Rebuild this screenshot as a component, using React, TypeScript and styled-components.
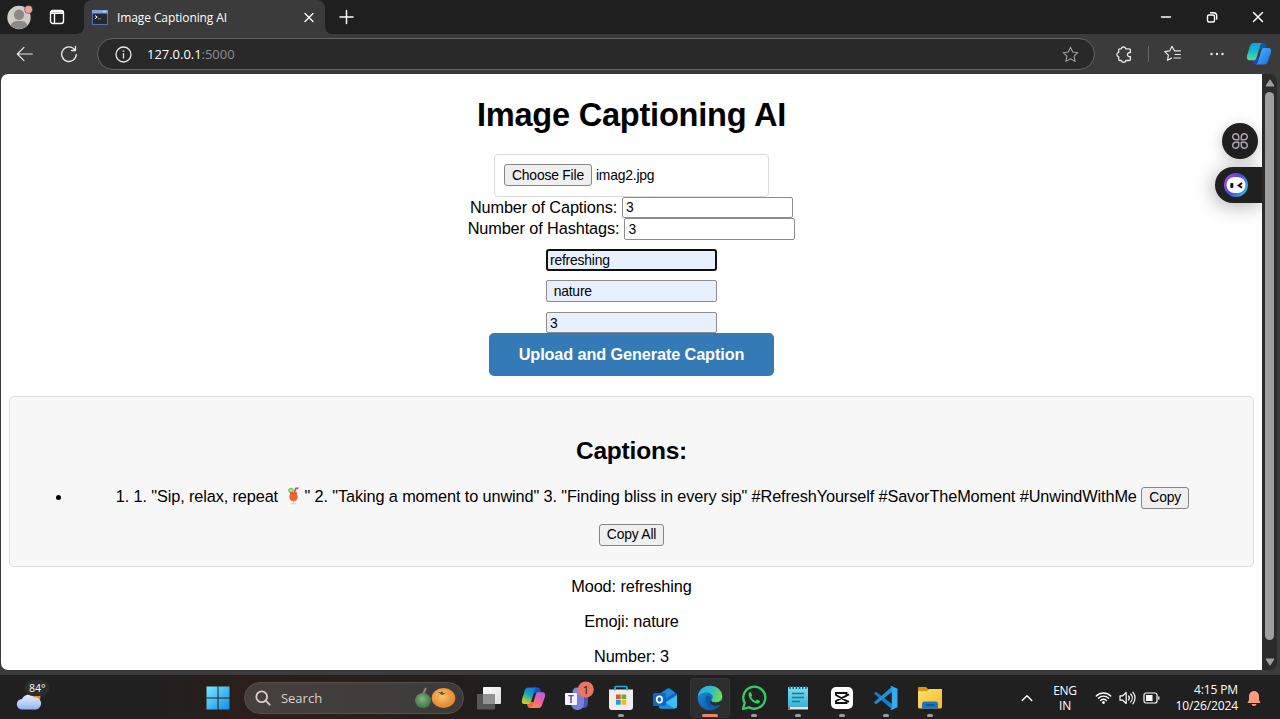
import React from "react";
import styled, { createGlobalStyle, css } from "styled-components";

const Global = createGlobalStyle`
  body { margin: 0; overflow: hidden; background: #3b3b3b; }
  * { box-sizing: border-box; }
  svg { display: block; flex: none; }
`;

const arial = `"Liberation Sans", Arial, sans-serif`;
const ui = `"Open Sans", "Noto Sans", sans-serif`;

const Screen = styled.div`
  width: 1280px;
  height: 719px;
  display: flex;
  flex-direction: column;
  background: #3b3b3b;
  font-family: ${ui};
  overflow: hidden;
`;

/* ---------- Browser chrome ---------- */
const TabStrip = styled.header`
  height: 34px;
  flex: none;
  display: flex;
  background: #1f1f1f;
  color: #fff;
`;
const StripLead = styled.div`
  width: 84px;
  display: flex;
  align-items: center;
  padding-left: 6px;
  gap: 16px;
`;
const Tab = styled.div`
  width: 241px;
  height: 34px;
  display: flex;
  align-items: center;
  padding: 0 10px 0 8px;
  background: #3b3b3b;
  border-radius: 8px 8px 0 0;
  position: relative;
  &::before,
  &::after {
    content: "";
    position: absolute;
    bottom: 0;
    width: 7px;
    height: 7px;
  }
  &::before { left: -7px; background: radial-gradient(circle at 0 0, #1f1f1f 6.5px, #3b3b3b 7px); }
  &::after { right: -7px; background: radial-gradient(circle at 100% 0, #1f1f1f 6.5px, #3b3b3b 7px); }
`;
const TabTitle = styled.span`
  flex: 1;
  margin-left: 9px;
  font-size: 12px;
  letter-spacing: -0.1px;
  white-space: nowrap;
`;
const NewTab = styled.div`
  padding: 9px 0 0 14px;
  flex: 1;
`;
const WindowButtons = styled.div`
  display: flex;
  align-items: center;
  gap: 31px;
  padding-right: 14px;
`;
const Toolbar = styled.div`
  height: 40px;
  flex: none;
  display: flex;
  align-items: center;
  padding: 0 8px 0 16px;
  color: #e8e8e8;
`;
const NavButtons = styled.div`
  display: flex;
  gap: 26px;
  width: 81px;
`;
const AddressBar = styled.div`
  width: 998px;
  height: 32px;
  display: flex;
  align-items: center;
  padding: 0 15px 0 17px;
  border: 1px solid #636363;
  border-radius: 16px;
  background: #292929;
`;
const Url = styled.span`
  flex: 1;
  margin-left: 15px;
  font-size: 13px;
  letter-spacing: -0.03px;
  color: #fff;
  span { color: #8f8f8f; }
`;
const ToolbarActions = styled.div`
  flex: 1;
  display: flex;
  align-items: center;
  padding-left: 21px;
  gap: 15px;
`;
const Menu = styled.div`
  display: flex;
  align-items: center;
  gap: 21px;
  margin-left: 12px;
`;
const Divider = styled.i`
  width: 1px;
  height: 16px;
  background: #646464;
`;

/* ---------- Page ---------- */
const Viewport = styled.div`
  height: 596px;
  flex: none;
  display: flex;
  padding-left: 1px;
  position: relative;
`;
const Page = styled.main`
  width: 1261px;
  height: 596px;
  padding: 21px 8px 0;
  background: #fff;
  border-radius: 7px 0 0 7px;
  color: #000;
  font-family: ${arial};
  font-size: 16.3px;
  letter-spacing: -0.11px;
  display: flex;
  flex-direction: column;
  align-items: center;
  overflow: hidden;
  & > * { flex: none; }
`;
const Title = styled.h1`
  margin: 0 0 20px;
  font-size: 32.6px;
  line-height: 39px;
  letter-spacing: -0.24px;
`;
const Button = styled.button`
  height: 22px;
  padding: 0 7px;
  border: 1px solid #858585;
  border-radius: 3px;
  background: #efefef;
  color: #000;
  font: 13.9px ${arial};
  letter-spacing: -0.2px;
  line-height: 19px;
  white-space: nowrap;
`;
const FileBox = styled.div`
  width: 275px;
  height: 42.5px;
  display: flex;
  align-items: center;
  gap: 4px;
  padding-left: 9px;
  border: 1px solid #dadada;
  border-radius: 4px;
  font-size: 13.9px;
  letter-spacing: -0.2px;
`;
const FieldRow = styled.label`
  display: flex;
  align-items: center;
  gap: 5px;
  height: 21.7px;
  line-height: 20px;
  span { margin-top: -1.5px; }
`;
const Input = styled.input<{ $filled?: boolean; $focus?: boolean }>`
  width: 171px;
  height: 21.5px;
  padding: 0 3px;
  border: 1px solid #8c8c8c;
  border-radius: 2px;
  background: ${(p) => (p.$filled ? "#e8f0fe" : "#fff")};
  font: 13.9px ${arial};
  letter-spacing: -0.2px;
  color: #000;
  outline: none;
  ${(p) =>
    p.$focus &&
    css`
      border: 2px solid #101010;
      border-radius: 3px;
      padding: 0 2px;
    `}
`;
const HintFields = styled.div`
  display: flex;
  flex-direction: column;
  gap: 9.8px;
  margin-top: 9.3px;
`;
const Submit = styled.button`
  width: 285.5px;
  height: 43px;
  padding: 0;
  border: 0;
  border-radius: 5px;
  background: #337ab7;
  color: #fff;
  font: bold 16.3px ${arial};
  letter-spacing: -0.12px;
`;
const Results = styled.section`
  width: 1245px;
  height: 171.5px;
  margin-top: 19.7px;
  padding: 39px 21px 0 21px;
  border: 1px solid #ddd;
  border-radius: 5px;
  background: #f7f7f7;
  text-align: center;
`;
const ResultsTitle = styled.h2`
  margin: 0;
  font-size: 24.5px;
  line-height: 30px;
  letter-spacing: -0.2px;
`;
const CaptionList = styled.ul`
  margin: 21px 0 15px;
  padding: 0 0 0 41.7px;
`;
const Caption = styled.li`
  height: 22px;
  line-height: 22px;
  white-space: nowrap;
  display: flex;
  justify-content: center;
  align-items: center;
  gap: 4.5px;
  position: relative;
  &::before {
    content: "";
    position: absolute;
    left: -17px;
    top: 8px;
    width: 5px;
    height: 5px;
    border-radius: 50%;
    background: #000;
  }
`;
const CaptionText = styled.span`
  margin-top: -3px;
  svg { display: inline-block; vertical-align: -3px; }
`;
const Detail = styled.p`
  margin: 0;
  height: 34.7px;
  line-height: 20px;
  &:first-of-type { margin-top: 9px; }
`;
const Scrollbar = styled.div`
  width: 15px;
  height: 596px;
  display: flex;
  flex-direction: column;
  align-items: center;
  padding: 5px 0 3px;
  background: #2b2b2b;
  border-radius: 0 7px 7px 0;
`;
const Thumb = styled.div`
  width: 9px;
  height: 548px;
  margin: 5px 0 18px;
  border-radius: 5px;
  background: #9f9f9f;
`;
const FloatingTools = styled.div`
  position: absolute;
  right: 18px;
  top: 49px;
  display: flex;
  flex-direction: column;
  align-items: flex-end;
  gap: 8px;
`;
const RoundTool = styled.div`
  width: 36px;
  height: 36px;
  margin-right: 4px;
  border-radius: 50%;
  background: #202020;
  display: grid;
  place-items: center;
  box-shadow: 0 3px 14px rgba(0, 0, 0, 0.22);
`;
const Assistant = styled.div`
  width: 47.5px;
  height: 36px;
  padding: 6px 0 0 9px;
  border-radius: 18px 0 0 18px;
  background: #202020;
  box-shadow: -2px 3px 20px rgba(0, 0, 0, 0.3);
  clip-path: inset(-50px 0 -50px -50px);
`;

/* ---------- Taskbar ---------- */
const Taskbar = styled.footer`
  margin-top: 5px;
  height: 44px;
  flex: none;
  display: flex;
  align-items: center;
  background: linear-gradient(90deg, #202020 150px, #291e1a 240px, #2b1f19 310px, #211f1e 450px, #202020 520px);
  color: #fff;
`;
const Weather = styled.div`
  width: 196px;
  height: 44px;
  padding: 14px 0 0 16px;
  position: relative;
`;
const Temperature = styled.span`
  position: absolute;
  left: 25px;
  top: 5px;
  width: 24px;
  height: 16px;
  padding-left: 4px;
  border-radius: 8px;
  background: #2d2d2d;
  font-size: 10.5px;
  line-height: 16px;
`;
const Slot = styled.div<{ $mark?: "idle" | "active" }>`
  width: 44.15px;
  height: 44px;
  padding-top: 2px;
  display: grid;
  place-items: center;
  position: relative;
  ${(p) =>
    p.$mark &&
    css`
      &::after {
        content: "";
        position: absolute;
        bottom: 2px;
        left: 50%;
        width: ${p.$mark === "active" ? 16 : 6}px;
        height: 3px;
        border-radius: 2px;
        transform: translateX(-50%);
        background: ${p.$mark === "active" ? "#ee8568" : "#9b9b9b"};
      }
    `}
  ${(p) =>
    p.$mark === "active" &&
    css`
      &::before {
        content: "";
        position: absolute;
        inset: 3px 2px 1px;
        border: 1px solid #353535;
        border-radius: 4px;
        background: #2d2d2d;
      }
    `}
  svg { position: relative; }
`;
const Search = styled.div`
  width: 220px;
  height: 32px;
  margin: 1px 2.9px 0 3.8px;
  padding: 0 7px 0 10px;
  display: flex;
  align-items: center;
  border: 1px solid #56504d;
  border-radius: 16px;
  background: linear-gradient(90deg, #47403d, #3c3b3a);
  color: #d4d0ce;
  font-size: 13px;
  span { flex: 1; margin-left: 10px; }
`;
const Tray = styled.div`
  flex: 1;
  display: flex;
  align-items: center;
  justify-content: flex-end;
  padding: 2px 19.5px 0 0;
`;
const Language = styled.div`
  width: 30px;
  margin: 0 15px 0 17px;
  text-align: center;
  font-size: 12px;
  line-height: 15.5px;
  letter-spacing: -0.3px;
`;
const Status = styled.div`
  display: flex;
  align-items: center;
  gap: 7px;
`;
const Clock = styled.div`
  width: 78px;
  text-align: right;
  font-size: 12px;
  line-height: 16px;
  letter-spacing: -0.12px;
  margin-right: 8.5px;
  white-space: nowrap;
`;

const Line = ({ w = 16, h = w, box = `0 0 ${w} ${h}`, sw = 1.2, children }: {
  w?: number; h?: number; box?: string; sw?: number; children: React.ReactNode;
}) => (
  <svg width={w} height={h} viewBox={box} fill="none" stroke="currentColor" strokeWidth={sw} strokeLinecap="round" strokeLinejoin="round">
    {children}
  </svg>
);

const Avatar = () => (
  <svg width="27" height="26" viewBox="0 0 27 26">
    <circle cx="13" cy="13.500" r="11.700" fill="#cfccc8" />
    <circle cx="13" cy="10.800" r="5.200" fill="#8c8885" />
    <path d="M5 22c0-4 3-5 8-5s8 1 8 5a12 12 0 0 1-16 0z" fill="#8c8885" />
    <circle cx="22.500" cy="5.500" r="4" fill="#f0a09b" stroke="#1f1f1f" strokeWidth=".4" />
  </svg>
);
const Favicon = () => (
  <svg width="16" height="15" viewBox="0 0 16 15">
    <rect x=".5" y=".5" width="15" height="14" fill="#25292e" stroke="#5571a8" />
    <path d="M0 0h16v3.500H0z" fill="#7ba3e0" />
    <path d="M11 1.700h3" stroke="#dbe9ff" />
    <path d="M3 5.500l2.200 1.600L3 8.700" stroke="#fff" fill="none" />
    <path d="M6 8.800h3" stroke="#79828e" />
  </svg>
);
const BrowserCopilot = () => (
  <svg width="26" height="24" viewBox="0 0 26 24">
    <defs>
      <linearGradient id="bc1" x1="0" y1="0" x2="0" y2="1"><stop stopColor="#169fe3" /><stop offset=".5" stopColor="#18b7cb" /><stop offset="1" stopColor="#5de08f" /></linearGradient>
      <linearGradient id="bc2" x1="0" y1="0" x2="1" y2="1"><stop stopColor="#56b8f8" /><stop offset="1" stopColor="#146de8" /></linearGradient>
    </defs>
    <path d="M14 1h3c2 0 2.700 1 3.200 2.800L21 7h-8z" fill="#125a9c" />
    <path d="M7 17l6-1-1 6H9c-2 0-2-3-2-5z" fill="#1749c6" />
    <path d="M8 1h9c-2 0-2.600 1.500-3.200 4l-3 10c-.8 2.700-2 3.300-4 3.300H4C1 18.300.4 16 1.200 13L4 4c.8-2 1.900-3 4-3z" fill="url(#bc1)" />
    <path d="M18 6h4c3 0 3.600 2 2.800 5L22 19c-.8 2.500-2 3.500-4.500 3.500H9c2 0 2.700-1.500 3.300-3.700l2.700-9.300C15.700 7 16.500 6 18 6z" fill="url(#bc2)" />
  </svg>
);
const Drink = () => (
  <svg width="22" height="18" viewBox="0 0 22 18">
    <path d="M12.300 6l1.500-4.500 2.700-.6" stroke="#dc405b" strokeWidth="1.500" fill="none" />
    <circle cx="9" cy="3.600" r="2.800" fill="#63d35c" />
    <circle cx="9" cy="3.600" r="1.400" fill="#a9e891" />
    <path d="M8 5.500h7c-.6 2 .9 2.300.7 4.700-.2 2.500-2 3.900-4.200 3.900s-4-1.400-4.200-3.900C7.100 7.800 8.600 7.500 8 5.500z" fill="#f3652b" />
    <path d="M8 5.500h7l-.2 1.200H8z" fill="#e34b35" />
    <path d="M11.500 14v2.500M8.500 16.800h6" stroke="#bed5ed" strokeWidth="1" />
  </svg>
);
const Face = () => (
  <svg width="24" height="24" viewBox="0 0 24 24">
    <defs><linearGradient id="fc" x1="0" y1=".2" x2="1" y2=".8"><stop stopColor="#a44bf4" /><stop offset=".45" stopColor="#5046df" /><stop offset="1" stopColor="#37bddf" /></linearGradient></defs>
    <circle cx="12" cy="12" r="12" fill="url(#fc)" />
    <rect x="2.500" y="4" width="19" height="16" rx="8" fill="#fff" />
    <rect x="6.300" y="10" width="3" height="5" rx="1" fill="#111" />
    <path d="M18 10l-3.300 2.500L18 14.800" stroke="#111" strokeWidth="2" fill="none" />
  </svg>
);
const Cloud = () => (
  <svg width="27" height="23" viewBox="0 0 27 23">
    <defs><linearGradient id="cl" x1="0" y1="0" x2="0" y2="1"><stop stopColor="#e5edff" /><stop offset=".6" stopColor="#b6cdf7" /><stop offset="1" stopColor="#8fb2ec" /></linearGradient></defs>
    <circle cx="19.500" cy="8" r="5" fill="#e98c2c" />
    <path d="M6 20.500A5 5 0 0 1 6 10.100 7 7 0 0 1 18 8.500a5.800 5.800 0 0 1 2 12z" fill="url(#cl)" />
  </svg>
);
const Windows = () => (
  <svg width="24" height="24" viewBox="0 0 24 24">
    <defs><linearGradient id="wn" x1="0" y1="0" x2="1" y2="1"><stop stopColor="#7ae7fb" /><stop offset="1" stopColor="#108fea" /></linearGradient></defs>
    <path d="M.5.500h11v11H.5zM12.500.500h11v11h-11zM.5 12.500h11v11H.5zM12.500 12.500h11v11h-11z" fill="url(#wn)" />
  </svg>
);
const Pumpkins = () => (
  <svg width="42" height="22" viewBox="0 0 42 22">
    <defs>
      <radialGradient id="gp" cx=".45" cy=".4"><stop stopColor="#84b781" /><stop offset="1" stopColor="#477c4c" /></radialGradient>
      <radialGradient id="op" cx=".45" cy=".4"><stop stopColor="#fbc470" /><stop offset="1" stopColor="#e88d34" /></radialGradient>
    </defs>
    <path d="M9 7c1-2 2-4 3-6" stroke="#9f806f" strokeWidth="2" />
    <ellipse cx="9" cy="13.500" rx="8" ry="7.500" fill="url(#gp)" />
    <path d="M6 7c-3 4-3 9 0 13M10 7c3 4 3 9 0 13" stroke="#5b8f5c" strokeWidth=".6" fill="none" />
    <ellipse cx="29.500" cy="11" rx="11.800" ry="10" fill="url(#op)" />
    <path d="M27 6c-5 3-5 11-1 14M31 5c6 2 8 8 4 14" stroke="#e3983f" strokeWidth=".8" fill="none" />
    <path d="M24 5l3 .5 1-1.500 1 2 3 .5-4 1.500z" fill="#6b4a2a" />
  </svg>
);
const TaskView = () => (
  <svg width="25" height="24" viewBox="0 0 25 24">
    <defs><linearGradient id="tv" x1="0" y1="0" x2="1" y2="1"><stop stopColor="#fff" /><stop offset="1" stopColor="#ddd" /></linearGradient></defs>
    <rect x="7" y="1" width="18" height="17" rx="1" fill="url(#tv)" />
    <rect x="1" y="8" width="18" height="15.500" rx="1" fill="#5d5d5d" fillOpacity=".9" />
    <path d="M7 8h12v10H7z" fill="#929292" />
  </svg>
);
const Copilot = () => (
  <svg width="25" height="24" viewBox="0 0 26 24">
    <defs>
      <linearGradient id="c1" x1=".6" y1="0" x2=".2" y2="1"><stop stopColor="#1778e4" /><stop offset=".45" stopColor="#19a6b4" /><stop offset=".75" stopColor="#8dc645" /><stop offset="1" stopColor="#f2c32e" /></linearGradient>
      <linearGradient id="c2" x1=".9" y1="0" x2=".2" y2="1"><stop stopColor="#a064ef" /><stop offset=".5" stopColor="#ee609a" /><stop offset="1" stopColor="#fc914d" /></linearGradient>
    </defs>
    <path d="M14 1h3c2 0 2.700 1 3.200 2.800L21 7h-8z" fill="#1852c2" />
    <path d="M6 17l7-1-1 6.500H9c-2 0-2.500-3-3-5.500z" fill="#f26847" />
    <path d="M8 1h9c-2 0-2.600 1.500-3.200 4l-3 10c-.8 2.700-2 3.300-4 3.300H4C1 18.300.4 16 1.200 13L4 4c.8-2 1.900-3 4-3z" fill="url(#c1)" />
    <path d="M18 6h4c3 0 3.600 2 2.800 5L22 19c-.8 2.500-2 3.500-4.500 3.500H9c2 0 2.700-1.500 3.300-3.700l2.700-9.300C15.700 7 16.500 6 18 6z" fill="url(#c2)" />
  </svg>
);
const badgeText = { fontFamily: "Open Sans, sans-serif" };
const Teams = () => (
  <svg width="34" height="34" viewBox="0 0 34 34">
    <circle cx="17" cy="11" r="4.500" fill="#7b83eb" />
    <path d="M20 14h8v8c0 3-2 5-5 5z" fill="#4b55b9" />
    <path d="M11 14h13v8c0 4.500-3 7-6.500 7S11 26.500 11 22z" fill="#7680df" />
    <rect x="5" y="12" width="12" height="12" rx="1" fill="#f5f5ff" />
    <text x="11" y="22" textAnchor="middle" fontSize="10" fontWeight="700" fill="#5059bd" {...badgeText}>T</text>
    <circle cx="25.800" cy="8.500" r="8" fill="#e97560" />
    <text x="25.800" y="12.500" textAnchor="middle" fontSize="11" fill="#24100c" {...badgeText}>1</text>
  </svg>
);
const Store = () => (
  <svg width="26" height="26" viewBox="0 0 26 26">
    <path d="M7 6V2.500Q7 1.500 8 1.500h10q1 0 1 1V6" fill="none" stroke="#2ba9d7" strokeWidth="1.700" />
    <path d="M1 4.500h24V22q0 3-3 3H4q-3 0-3-3z" fill="#eee" />
    <path d="M7 5.500V3M19 5.500V3" stroke="#2ba9d7" strokeWidth="1.700" />
    <path d="M8 9.500h4.700v4.700H8z" fill="#e65329" /><path d="M13.500 9.500h4.700v4.700h-4.700z" fill="#75ac27" />
    <path d="M8 15h4.700v4.700H8z" fill="#2398dd" /><path d="M13.500 15h4.700v4.700h-4.700z" fill="#f6b817" />
  </svg>
);
const Outlook = () => (
  <svg width="26" height="24" viewBox="0 0 26 24">
    <path d="M4 10L15 2.500q1.500-1 3 0L25 8v5L12 20z" fill="#1266bd" />
    <path d="M8 8l9-5.500 6 4L12 14z" fill="#2389df" />
    <path d="M25 9v11q0 2.500-2.500 2.500H9q-2 0-2-2z" fill="#42bdf1" />
    <path d="M7 13l16 9.500H9q-2 0-2-2z" fill="#1990e1" />
    <rect x="1" y="7" width="13" height="13" rx="1.500" fill="#0d69c8" />
    <ellipse cx="7.400" cy="13.500" rx="2.700" ry="3.100" fill="none" stroke="#fff" strokeWidth="1.700" />
  </svg>
);
const Edge = () => (
  <svg width="26" height="26" viewBox="0 0 26 26">
    <defs>
      <linearGradient id="e1" x1="0" y1=".2" x2="1" y2=".5"><stop stopColor="#2caae8" /><stop offset=".5" stopColor="#2dbcc9" /><stop offset="1" stopColor="#6ddf4d" /></linearGradient>
      <linearGradient id="e2" x1="0" y1="0" x2="1" y2="1"><stop stopColor="#1b92e4" /><stop offset="1" stopColor="#084b93" /></linearGradient>
    </defs>
    <circle cx="13" cy="13" r="12.300" fill="url(#e2)" />
    <path d="M.7 12C1.500 5 6.500.700 13 .700c7 0 12.300 5 12.300 10.500 0 4-3 6.300-6.500 6.300-2.600 0-4.500-1-4.500-2s1.400-1.500 1.400-3.500c0-2.500-2.700-4.500-6.200-4.500C5.500 7.500 2 9.300.7 12z" fill="url(#e1)" />
    <path d="M9.500 11c-2.500 4 0 11 6 12.500 3 .7 6-.3 8.500-4-4 2-8 1-10-1-2-2-1.800-4 .2-5.500-1-1.800-3-2.500-4.700-2z" fill="#0b5aa5" />
    <path d="M14.300 15.500c0 1 1.900 2 4.500 2 2 0 4-.7 5.300-2.200l.7 2.200-1 2.200c-4 2-8 1-10-1-1.200-1.200-.8-2.700.5-3.200z" fill="#2d2d2d" />
  </svg>
);
const WhatsApp = () => (
  <svg width="26" height="26" viewBox="0 0 26 26" fill="none">
    <path d="M2 24l1.700-6A11 11 0 1 1 8 22.300z" stroke="#31cf63" strokeWidth="2.300" strokeLinejoin="round" />
    <path d="M9.500 6.800c-1.500.5-2.200 2-1.800 3.800 1 4.200 4.200 7 8 8 1.800.4 3.300-.7 3.400-2.500l-3-1.600-1.600 1.500c-2-.8-3.500-2.200-4.300-4l1.100-1.500z" fill="#31cf63" />
  </svg>
);
const Notepad = () => (
  <svg width="22" height="26" viewBox="0 0 22 26">
    <defs><linearGradient id="np" x1="0" y1="0" x2="0" y2="1"><stop stopColor="#77dff2" /><stop offset="1" stopColor="#3bb2d7" /></linearGradient></defs>
    <path d="M1 20h20v5H1z" fill="#bc6b2c" /><path d="M3 22h18v2H3z" fill="#ece4da" />
    <rect x="1" y="2" width="20" height="20" rx="1" fill="url(#np)" />
    <path d="M3 1v3M6.200 1v3M9.400 1v3M12.600 1v3M15.800 1v3M19 1v3" stroke="#17627c" strokeWidth="1.400" />
    <path d="M5 8.500h12M5 12.500h12M5 16.500h8" stroke="#187998" strokeWidth="1.500" />
  </svg>
);
const CapCut = () => (
  <svg width="22" height="22" viewBox="0 0 22 22">
    <rect width="22" height="22" rx="5" fill="#fff" />
    <path d="M18 7.300L5 14v2h10.500v-2L5 8V6h10.500v2M15 13.500l3 1.400" fill="none" stroke="#101010" strokeWidth="1.900" />
  </svg>
);
const VsCode = () => (
  <svg width="26" height="26" viewBox="0 0 26 26">
    <path d="M1 8.500L3 6.800l16 12.200v5.500z" fill="#177fc9" />
    <path d="M1 17.500l2 1.700L19 7V1.500z" fill="#2092dd" />
    <path d="M18.500 1l6 2.800v18.400l-6 2.800-1.500-.8c1 .3 1.800-.2 1.800-1.200V3c0-1-.8-1.500-1.800-1.200z" fill="#38aaf2" />
  </svg>
);
const Explorer = () => (
  <svg width="26" height="24" viewBox="0 0 26 24">
    <defs><linearGradient id="ex" x1="0" y1="0" x2="1" y2="1"><stop stopColor="#ffe071" /><stop offset="1" stopColor="#f8ba25" /></linearGradient></defs>
    <path d="M1 2q0-1 1-1h7l3 3v5H1z" fill="#d89512" />
    <path d="M1 5h9l2-2h13v18q0 1.500-1.500 1.500h-21Q1 22.500 1 21z" fill="url(#ex)" />
    <path d="M5 22.500V18q0-2.500 2.500-2.500h11Q21 15.500 21 18v4.500z" fill="#1678c9" />
    <path d="M8.500 19h9" stroke="#0b4d88" strokeWidth="1.500" />
  </svg>
);
const FourPetals = () => (
  <Line w={18} sw={1.5}>
    <path d="M7.700 7.700H4.800A3 3 0 1 1 7.700 4.800zM10.300 7.700V4.800a3 3 0 1 1 2.900 2.900zM7.700 10.300v2.900a3 3 0 1 1-2.900-2.900zM10.300 10.300h2.900a3 3 0 1 1-2.900 2.900z" stroke="#aaa5ad" />
  </Line>
);

const App = () => (
  <Screen>
    <Global />
    <TabStrip>
      <StripLead>
        <Avatar />
        <Line w={16} sw={1.4}>
          <rect x="1.500" y="1.500" width="13" height="13" rx="2.500" />
          <path d="M2 2.500h12M2 4.300h12M5.500 4.500v9.500" />
        </Line>
      </StripLead>
      <Tab>
        <Favicon />
        <TabTitle>Image Captioning AI</TabTitle>
        <Line w={12} sw={1.3}><path d="M2 2.500l8 8M10 2.500l-8 8" /></Line>
      </Tab>
      <NewTab><Line w={16} sw={1.5}><path d="M7.500 1.500v13M1 8h13" /></Line></NewTab>
      <WindowButtons>
        <Line w={14} sw={1.4}><path d="M1.500 7h9" /></Line>
        <Line w={14} sw={1.4}><rect x="2.500" y="5" width="7" height="7" rx="1.500" /><path d="M5.500 2.800h3a3.200 3.200 0 0 1 3.200 3.200v3" /></Line>
        <Line w={16} sw={1.5}><path d="M3.500 3.500l9 9M12.500 3.500l-9 9" /></Line>
      </WindowButtons>
    </TabStrip>

    <Toolbar>
      <NavButtons>
        <Line w={18}><path d="M16.300 9H1.500M8 2.300L1.300 9 8 15.700" /></Line>
        <Line w={18} sw={1.3}><path d="M15 5A7.300 7.300 0 1 0 16.300 9.500M15.500 1.500v4H11.500" /></Line>
      </NavButtons>
      <AddressBar>
        <Line w={17} sw={1.3}><circle cx="8.500" cy="8.500" r="7.500" /><path d="M8.500 7.600v4.400" /><circle cx="8.500" cy="5.100" r=".3" /></Line>
        <Url>127.0.0.1<span>:5000</span></Url>
        <Line w={17} box="0 0 24 24" sw={1.5}><path d="M12 1.800l3.100 6.700 7.300.9-5.400 5 1.500 7.300L12 18.100l-6.500 3.600L7 14.400l-5.400-5 7.300-.9z" stroke="#a2a2a2" /></Line>
      </AddressBar>
      <ToolbarActions>
        <Line w={17} sw={1.3}>
          <path d="M5.200 2.800a2.300 2.300 0 0 1 4.500 0h3.700q1 0 1 1v2.900c-1.200-.5-3 .2-3 1.900s1.800 2.400 3 1.900v3q0 1-1 1H9.900a2.300 2.300 0 0 1-4.500 0H3.700q-1 0-1-1v-2.700a2.300 2.300 0 0 1 0-4.500V3.800q0-1 1-1z" />
        </Line>
        <Divider />
        <Line w={18} sw={1.2}><path d="M10.500 5.800L8 1.300 5.700 5.900l-5 .7 3.700 3.500-.9 5.200 4-2.200M10.500 5.800h6M11 9.500h5.500M10 13h6.500" /></Line>
        <Menu>
          <svg width="16" height="6"><circle cx="2.500" cy="3" r="1.200" fill="#eee" /><circle cx="8" cy="3" r="1.200" fill="#eee" /><circle cx="13.500" cy="3" r="1.200" fill="#eee" /></svg>
          <BrowserCopilot />
        </Menu>
      </ToolbarActions>
    </Toolbar>

    <Viewport>
      <Page>
        <Title>Image Captioning AI</Title>
        <FileBox><Button>Choose File</Button>imag2.jpg</FileBox>
        <FieldRow><span>Number of Captions:</span><Input defaultValue="3" /></FieldRow>
        <FieldRow><span>Number of Hashtags:</span><Input defaultValue="3" /></FieldRow>
        <HintFields>
          <Input $filled $focus defaultValue="refreshing" />
          <Input $filled defaultValue=" nature" />
          <Input $filled defaultValue="3" />
        </HintFields>
        <Submit>Upload and Generate Caption</Submit>
        <Results>
          <ResultsTitle>Captions:</ResultsTitle>
          <CaptionList>
            <Caption>
              <CaptionText>
                1. 1. "Sip, relax, repeat <Drink />" 2. "Taking a moment to unwind" 3. "Finding bliss in every sip" #RefreshYourself #SavorTheMoment #UnwindWithMe
              </CaptionText>
              <Button>Copy</Button>
            </Caption>
          </CaptionList>
          <Button>Copy All</Button>
        </Results>
        <Detail>Mood: refreshing</Detail>
        <Detail>Emoji: nature</Detail>
        <Detail>Number: 3</Detail>
      </Page>
      <Scrollbar>
        <svg width="10" height="8" viewBox="0 0 10 8"><path d="M5 .8L9 7H1z" fill="#9f9f9f" stroke="#9f9f9f" strokeLinejoin="round" /></svg>
        <Thumb />
        <svg width="10" height="8" viewBox="0 0 10 8"><path d="M5 7.200L9 1H1z" fill="#9f9f9f" stroke="#9f9f9f" strokeLinejoin="round" /></svg>
      </Scrollbar>
      <FloatingTools>
        <RoundTool><FourPetals /></RoundTool>
        <Assistant><Face /></Assistant>
      </FloatingTools>
    </Viewport>

    <Taskbar>
      <Weather><Cloud /><Temperature>84°</Temperature></Weather>
      <Slot><Windows /></Slot>
      <Search>
        <Line w={16} sw={1.8}><circle cx="6.700" cy="6.700" r="5.400" /><path d="M10.700 10.700l4 4" /></Line>
        <span>Search</span>
        <Pumpkins />
      </Search>
      <Slot><TaskView /></Slot>
      <Slot><Copilot /></Slot>
      <Slot><Teams /></Slot>
      <Slot $mark="idle"><Store /></Slot>
      <Slot><Outlook /></Slot>
      <Slot $mark="active"><Edge /></Slot>
      <Slot $mark="idle"><WhatsApp /></Slot>
      <Slot $mark="idle"><Notepad /></Slot>
      <Slot $mark="idle"><CapCut /></Slot>
      <Slot $mark="idle"><VsCode /></Slot>
      <Slot $mark="idle"><Explorer /></Slot>
      <Tray>
        <Line w={12} sw={1.4}><path d="M1.200 8.500L6 3.700l4.800 4.800" /></Line>
        <Language>ENG<br />IN</Language>
        <Status>
          <Line w={17} h={14} sw={1.3}><path d="M1.300 5a10.200 10.200 0 0 1 14.400 0M3.400 7.300a7.200 7.200 0 0 1 10.200 0M5.500 9.500a4.200 4.200 0 0 1 6 0" /><circle cx="8.500" cy="11.600" r=".8" fill="currentColor" /></Line>
          <Line w={17} h={16} sw={1.2}><path d="M1 5.800h2.700L7.200 2.500v11L3.700 10.200H1zM9.500 6a3 3 0 0 1 0 4M11.700 4a6 6 0 0 1 0 8M13.900 2.200a9 9 0 0 1 0 11.600" /></Line>
          <Line w={17} h={12} sw={1.2}><rect x="1" y="1" width="13" height="10" rx="2" /><path d="M3 3h6.500v6H3z" fill="currentColor" stroke="none" /><path d="M15.800 4.800v2.400" /></Line>
        </Status>
        <Clock>4:15 PM<br />10/26/2024</Clock>
        <svg width="14" height="17" viewBox="0 0 14 17"><path d="M7 1a5 5 0 0 1 5 5v4l1.500 3H.5L2 10V6a5 5 0 0 1 5-5zM4.500 14h5A2.500 2.500 0 0 1 7 16a2.500 2.500 0 0 1-2.500-2z" fill="#f89b7f" /></svg>
      </Tray>
    </Taskbar>
  </Screen>
);

export default App;
